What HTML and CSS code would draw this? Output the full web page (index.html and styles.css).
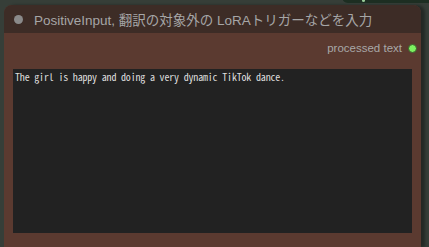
FILE: index.html
```html
<!DOCTYPE html>
<html lang="ja">
<head>
    <meta charset="UTF-8">
    <title>PositiveInput</title>
    <link rel="stylesheet" href="styles.css">
</head>
<body>
    <div class="other-node"><span class="other-dot"></span></div>
    <div class="node">
        <div class="node-title">
            <span class="title-dot"></span>
            <span class="title-text">PositiveInput, 翻訳の対象外の LoRAトリガーなどを入力</span>
        </div>
        <div class="node-body">
            <div class="output-row">
                <span class="output-label">processed text</span>
                <span class="output-dot"></span>
            </div>
            <div class="textarea">The girl is happy and doing a very dynamic TikTok dance.</div>
        </div>
    </div>
</body>
</html>
```

FILE: styles.css
```css
body {
    margin: 0;
    padding: 5px 8px 0 4px;
    background-color: #363e38;
    height: 247px;
    overflow: hidden;
    box-sizing: border-box;
    font-family: "Liberation Sans", Arial, "Noto Sans CJK JP", sans-serif;
}

/* 上の別ノードの一部 */
.other-node {
    position: absolute;
    left: 342px;
    top: -10px;
    width: 100px;
    height: 13px;
    background-color: #1d2e22;
    border-radius: 6px;
}
.other-dot {
    position: absolute;
    left: 20px;
    top: 9px;
    width: 3px;
    height: 3px;
    border-radius: 50%;
    background-color: #9c9;
}

.node {
    background-color: #5b3a30;
    border-radius: 8px 8px 0 0;
    height: 242px;
    box-shadow: 4px 0 3px rgba(0, 0, 0, 0.35);
}

.node-title {
    height: 28px;
    background-color: #3d2c26;
    border-radius: 8px 8px 0 0;
    display: flex;
    align-items: center;
    padding-left: 10px;
    gap: 11px;
}
.title-dot {
    width: 9px;
    height: 9px;
    border-radius: 50%;
    background-color: #8a8a8a;
}
.title-text {
    color: #a6a6a6;
    font-size: 13.5px;
}

.node-body {
    padding: 8px 9px 0 9px;
}
.output-row {
    display: flex;
    justify-content: flex-end;
    align-items: center;
    height: 14px;
    gap: 6px;
    margin-right: -5px;
    margin-bottom: 14px;
}
.output-label {
    color: #a8a8a8;
    font-size: 11.5px;
}
.output-dot {
    width: 7px;
    height: 7px;
    border-radius: 50%;
    background-color: #7df060;
    border: 1px solid #3a5a2a;
}

.textarea {
    height: 164px;
    box-sizing: border-box;
    background-color: #222;
    color: #ddd;
    padding: 2px 2px;
    font-family: "Noto Sans Mono CJK JP", "Liberation Mono", monospace;
    font-size: 10px;
    letter-spacing: -0.18px;
    line-height: 12px;
}
```
